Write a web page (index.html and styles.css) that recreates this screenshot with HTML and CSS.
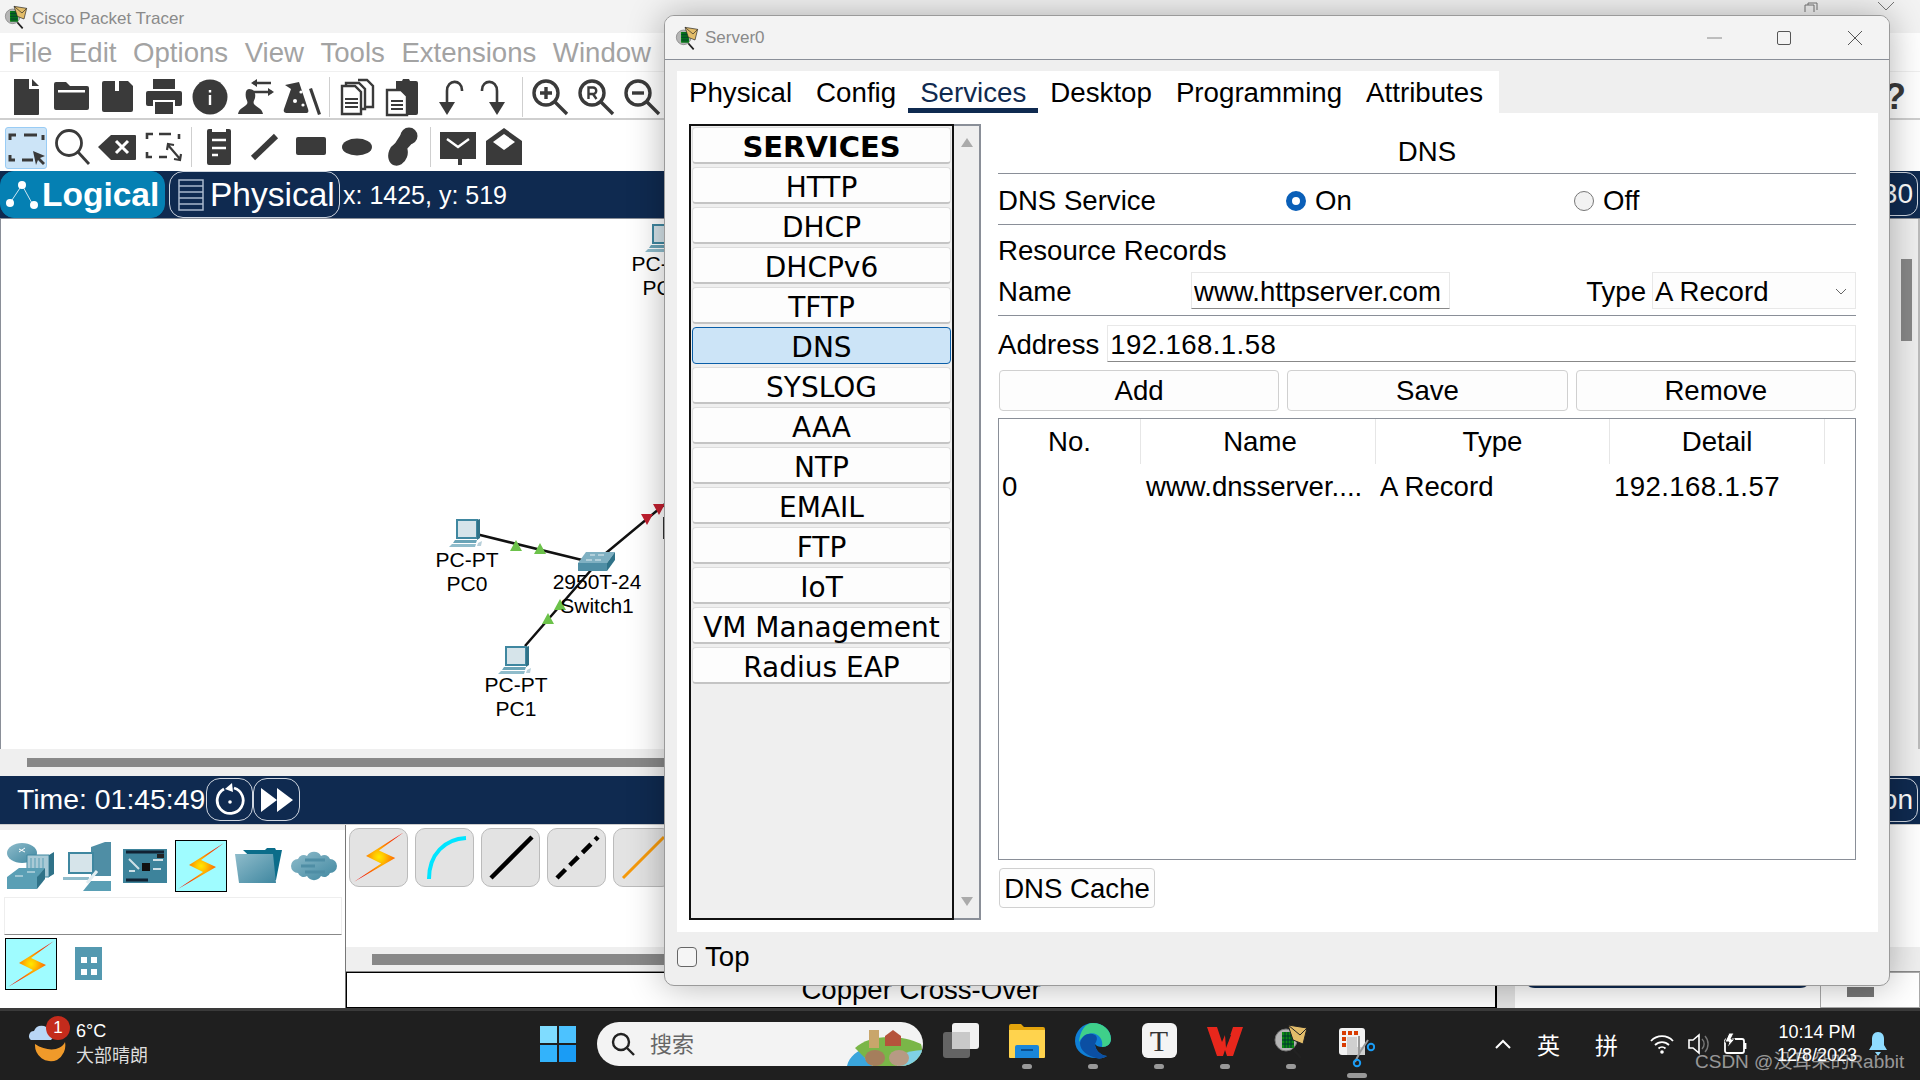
FILE: index.html
```html
<!DOCTYPE html>
<html lang="en">
<head>
  <meta charset="UTF-8">
  <title>Cisco Packet Tracer - Server0</title>
  <link rel="stylesheet" href="styles.css">
</head>
<body>

  <!-- shared drawings -->
  <svg class="defs" width="0" height="0">
    <defs>
      <radialGradient id="bolt-fill" cx="50%" cy="50%" r="55%">
        <stop offset="0" stop-color="#ffe800"/>
        <stop offset=".18" stop-color="#ffc800"/>
        <stop offset=".5" stop-color="#ff7a00"/>
        <stop offset="1" stop-color="#f00a00"/>
      </radialGradient>
      <linearGradient id="teal" x1="0" y1="0" x2="1" y2="1">
        <stop offset="0" stop-color="#8fbccb"/>
        <stop offset="1" stop-color="#3f87a0"/>
      </linearGradient>
      <symbol id="bolt" viewBox="0 0 50 50">
        <path fill="url(#bolt-fill)" d="M48 2 L13 24 L27 31 L2 48 L40 26 L25 19 Z"/>
      </symbol>
      <symbol id="pt-logo" viewBox="0 0 36 36">
        <circle cx="13" cy="17" r="11" fill="#b5b5b5" stroke="#777"/>
        <path d="M20 26 L28 35" stroke="#222" stroke-width="2.5"/>
        <rect x="9" y="9" width="12" height="16" fill="#0c8a12"/>
        <path d="M12 9v16M15 9v16M18 9v16M9 13h12M9 17h12M9 21h12" stroke="#033" stroke-width="1"/>
        <path d="M15 2 L34 5 L30 21 L20 17 Z" fill="#e3bd6a" stroke="#222"/>
        <path d="M15 2 L27 12 L34 5" fill="none" stroke="#222"/>
      </symbol>
      <symbol id="pc" viewBox="0 0 34 28">
        <path d="M8 1 H28 V19 H8 Z" fill="#d6e4ea" stroke="#3f87a0" stroke-width="2"/>
        <path d="M28 1 L31 0 V19 L28 21 Z" fill="#2f7288"/>
        <path d="M6 21 H28 L27 24 H4 Z" fill="#6aa4b7"/>
        <path d="M3 25 H27 L26 28 H0 Z" fill="#8fbccb"/>
        <path d="M29 24 L33 22 L32 27 L28 27 Z" fill="#b8d0da"/>
      </symbol>
    </defs>
  </svg>

  <div class="main-window">
    <div class="app-title">
      <svg class="title-logo"><use href="#pt-logo"/></svg>
      <span>Cisco Packet Tracer</span>
      <div class="app-title-btns">
        <svg width="14" height="10" viewBox="0 0 14 10"><path d="M1 10V3h9v7M4 3V1h9v7" fill="none" stroke="#777"/></svg>
        <svg width="18" height="10" viewBox="0 0 18 10"><path d="M2 0l8 8 M18 0l-8 8" stroke="#777" fill="none"/></svg>
      </div>
    </div>

    <div class="menu-bar">
      <span>File</span><span>Edit</span><span>Options</span><span>View</span><span>Tools</span><span>Extensions</span><span>Window</span>
    </div>

    <!-- first toolbar -->
    <div class="toolbar toolbar-one">
      <svg class="tool" viewBox="0 0 46 40"><path d="M11 2h15v10h10v25a1 1 0 0 1-1 1H11z"/><path d="M29 2l7 7h-7z"/></svg>
      <svg class="tool" viewBox="0 0 46 40"><path d="M5 7a2 2 0 0 1 2-2h10l4 4h17a2 2 0 0 1 2 2v20a2 2 0 0 1-2 2H7a2 2 0 0 1-2-2z"/><rect x="9" y="13" width="27" height="2.5" fill="#fff"/></svg>
      <svg class="tool" viewBox="0 0 46 40"><path d="M9 4h24l5 5v24a2 2 0 0 1-2 2H9a2 2 0 0 1-2-2V6a2 2 0 0 1 2-2z"/><rect x="20" y="4" width="4" height="10" fill="#fff"/></svg>
      <svg class="tool" viewBox="0 0 46 40"><rect x="12" y="2" width="22" height="10"/><rect x="5" y="14" width="36" height="15" rx="2"/><rect x="12" y="23" width="22" height="15" fill="#fff"/><rect x="14" y="25" width="18" height="12"/></svg>
      <svg class="tool" viewBox="0 0 46 40"><circle cx="23" cy="20" r="17.5"/><rect x="21.8" y="18" width="2.4" height="10" fill="#fff"/><rect x="21.8" y="13" width="2.4" height="2.5" fill="#fff"/></svg>
      <svg class="tool" viewBox="0 0 46 40"><path d="M16 12c5 0 7 4 6 9-1 3-2 4-1 6 2 3 8 4 9 10H5c1-6 7-7 9-10 1-2 0-3-1-6-1-5 0-9 3-9z"/><path d="M20 6h18M20 15h19" stroke="#3a3a3a" stroke-width="2.5" fill="none"/><path d="M24 2l-6 4 6 4zM35 11l6 4-6 4z"/></svg>
      <svg class="tool" viewBox="0 0 46 40"><path d="M6 8l14-3 9 27c1 3 0 4-2 4H8c-2 0-4-1-3-4l7-20z"/><path d="M30 12l3-1 9 26-3 1z"/><circle cx="16" cy="24" r="2" fill="#fff"/><circle cx="22" cy="15" r="1.6" fill="#fff"/><circle cx="24" cy="28" r="1.6" fill="#fff"/></svg>
      <i class="tool-sep"></i>
      <svg class="tool" viewBox="0 0 46 40"><path d="M12 6h13l6 6v20H12z M24 3h9l6 6v21h-8" fill="#fff" stroke="#3a3a3a" stroke-width="2.4"/><path d="M8 9h13l6 6v22H8z" fill="#fff" stroke="#3a3a3a" stroke-width="2.4"/><path d="M11 22h13M11 26h13M11 30h13" stroke="#3a3a3a" stroke-width="2.2"/></svg>
      <svg class="tool" viewBox="0 0 46 40"><path d="M16 4h6l1-2h6l1 2h6a2 2 0 0 1 2 2v30a2 2 0 0 1-2 2H16z"/><path d="M7 13h14l6 6v19H7z" fill="#fff" stroke="#3a3a3a" stroke-width="2.4"/><path d="M11 24h12M11 28h12M11 32h12" stroke="#3a3a3a" stroke-width="2.2"/></svg>
      <svg class="tool" viewBox="0 0 46 40"><path d="M21 27V14c0-12 15-12 15-1v1" fill="none" stroke="#3a3a3a" stroke-width="2.6"/><path d="M13 25h16l-8 13z"/></svg>
      <svg class="tool" viewBox="0 0 46 40"><path d="M25 27V14c0-12-15-12-15-1v1" fill="none" stroke="#3a3a3a" stroke-width="2.6"/><path d="M17 25h16l-8 13z"/></svg>
      <i class="tool-sep"></i>
      <svg class="tool" viewBox="0 0 46 40"><g fill="none" stroke="#3a3a3a"><circle cx="19" cy="16" r="12" stroke-width="3.4"/><path d="M28 25l12 12" stroke-width="3.4"/><path d="M13 16h12M19 10v12" stroke-width="3.4"/></g></svg>
      <svg class="tool" viewBox="0 0 46 40"><g fill="none" stroke="#3a3a3a"><circle cx="19" cy="16" r="12" stroke-width="3.4"/><path d="M28 25l12 12" stroke-width="3.4"/><path d="M15.5 22V10.5h4.500a3 3 0 0 1 0 6.500h-4.500M20 17l3.500 5" stroke-width="2.4"/></g></svg>
      <svg class="tool" viewBox="0 0 46 40"><g fill="none" stroke="#3a3a3a"><circle cx="19" cy="16" r="12" stroke-width="3.4"/><path d="M28 25l12 12" stroke-width="3.4"/><path d="M13 16h12" stroke-width="3.4"/></g></svg>
      <span class="help-mark">?</span>
    </div>

    <!-- second toolbar -->
    <div class="toolbar toolbar-two">
      <span class="tool-active"><svg class="tool" viewBox="0 0 46 40"><path d="M7 13V8h6M21 8h13M40 8v5M7 28v5h5M19 33h11" fill="none" stroke="#3a3a3a" stroke-width="3"/><path d="M30 24l12 5-5 2 5 5-2 2-5-5-2 5z"/></svg></span>
      <svg class="tool" viewBox="0 0 46 40"><g fill="none" stroke="#3a3a3a" stroke-width="2.8"><circle cx="20" cy="16" r="12.500"/><path d="M29 25l11 12"/></g></svg>
      <svg class="tool" viewBox="0 0 46 40"><path d="M3 20L16 8h24a1 1 0 0 1 1 1v23a1 1 0 0 1-1 1H16z"/><path d="M21 14l12 12M33 14L21 26" stroke="#fff" stroke-width="3"/></svg>
      <svg class="tool" viewBox="0 0 46 40"><path d="M6 12V7h6M18 7h12M38 7v5M6 25v5h5M18 30h8" fill="none" stroke="#3a3a3a" stroke-width="2.6"/><path d="M27 18l12 14M26 23l1-6 6 1M40 27l-1 6-6-1" fill="none" stroke="#3a3a3a" stroke-width="2.2"/></svg>
      <i class="tool-sep"></i>
      <svg class="tool" viewBox="0 0 46 40"><path d="M13 2h3v3h14V2h3a2 2 0 0 1 2 2v32a2 2 0 0 1-2 2H13a2 2 0 0 1-2-2V4a2 2 0 0 1 2-2z"/><path d="M16 13h14M16 21h14M16 28h6" stroke="#fff" stroke-width="2.5"/></svg>
      <svg class="tool" viewBox="0 0 46 40"><path d="M11 31L34 9" stroke="#3a3a3a" stroke-width="6" fill="none"/></svg>
      <svg class="tool" viewBox="0 0 46 40"><rect x="8" y="10" width="30" height="18" rx="2"/></svg>
      <svg class="tool" viewBox="0 0 46 40"><ellipse cx="23" cy="20" rx="15" ry="8.500"/></svg>
      <svg class="tool" viewBox="0 0 46 40"><circle cx="29" cy="9" r="8.500"/><ellipse cx="18" cy="27" rx="9.500" ry="12" transform="rotate(20 18 27)"/><path d="M23 4L14 18l12 5 11-12z"/></svg>
      <i class="tool-sep"></i>
      <svg class="tool" viewBox="0 0 46 40"><path d="M5 5h36v27H27v6h-4v-6H5z"/><path d="M12 12l11 8 11-8" fill="none" stroke="#fff" stroke-width="2.4"/></svg>
      <svg class="tool" viewBox="0 0 46 40"><path d="M5 14L23 1l18 13v24H5z"/><path d="M12 15l11-8 11 8-11 8z" fill="#fff"/></svg>
    </div>

    <div class="blue-bar">
      <div class="view-tab view-tab-on">
        <svg width="38" height="32" viewBox="0 0 38 32"><path d="M8 24L20 6l11 20" stroke="#cfe6f2" fill="none" stroke-width="1"/><circle cx="20" cy="6" r="4" fill="#fff"/><circle cx="8" cy="24" r="4" fill="#fff"/><circle cx="32" cy="26" r="4" fill="#fff"/></svg>
        <b>Logical</b>
      </div>
      <div class="view-tab">
        <svg width="30" height="34" viewBox="0 0 30 34"><path d="M3 2h24v30H3zM3 8h24M3 14h24M3 20h24M3 26h24" fill="none" stroke="#a9b8cb" stroke-width="1.500"/></svg>
        <span>Physical</span>
      </div>
      <span class="coords">x: 1425, y: 519</span>
      <span class="bar-right">Root 00:30</span>
    </div>

    <div class="canvas-row">
      <div class="canvas">
        <!-- diagram -->
        <svg class="links" width="700" height="540" viewBox="0 220 700 540">
          <path d="M476 535L582 561M525 647L592 570M606 554L665 505" stroke="#111" stroke-width="2.500" fill="none"/>
          <path d="M516 541l6 11h-12zM540 544l6 11h-12zM560 600l6 11h-12zM548 614l6 11h-12z" fill="#6cc24a"/>
          <path d="M647 526l-6-11h12zM659 516l-6-11h12z" fill="#c21f2f"/>
          <rect x="663" y="518" width="2" height="22" fill="#333"/>
        </svg>
        <svg class="node node-pc0"><use href="#pc"/></svg>
        <svg class="node node-pc1"><use href="#pc"/></svg>
        <svg class="node node-pc2"><use href="#pc"/></svg>
        <svg class="node node-switch" viewBox="0 0 37 20"><path d="M0 12L8 1h29l-8 11z" fill="#7fb0c2"/><path d="M0 12h29v8H0z" fill="#4f8ea5"/><path d="M29 12l8-11v8l-8 11z" fill="#2f7288"/><path d="M12 4h5M20 4h6M8 9h6M17 9h6" stroke="#e3eef2" stroke-width="1"/></svg>
        <div class="node-label label-pc0">PC-PT<br>PC0</div>
        <div class="node-label label-switch">2950T-24<br>Switch1</div>
        <div class="node-label label-pc1">PC-PT<br>PC1</div>
        <div class="node-label label-pc2">PC-PT<br>PC2</div>
      </div>
      <div class="v-scroll"><i></i></div>
    </div>
    <div class="h-scroll"><i></i></div>

    <div class="blue-bar time-bar">
      <span class="time-text">Time: 01:45:49</span>
      <span class="round-btn">
        <svg width="30" height="36" viewBox="0 0 30 36"><path d="M9 7A13 13 0 1 0 19 6" fill="none" stroke="#fff" stroke-width="2.800"/><path d="M17 1l1 9-8-3z" fill="#fff"/><circle cx="15" cy="20" r="1.800" fill="#fff"/></svg>
      </span>
      <span class="round-btn">
        <svg width="34" height="26" viewBox="0 0 34 26"><path d="M1 1l16 12L1 25zM17 1l16 12-16 12z" fill="#fff"/></svg>
      </span>
      <span class="bar-right">Simulation</span>
    </div>

    <div class="bottom-panel">
      <div class="device-panel">
        <div class="device-row">
          <svg class="device" width="48" height="50" viewBox="0 0 48 50"><ellipse cx="15" cy="12" rx="15" ry="10" fill="url(#teal)"/><path d="M12 8l6 3M18 7l-6 4" stroke="#fff"/><path d="M20 14h22v22H20z" fill="#a9cad6" stroke="#3f87a0"/><path d="M24 17v16M28 17v16M32 17v16M36 17v16" stroke="#5a9fb5"/><path d="M42 14l5-3v22l-5 3z" fill="#2f7288"/><path d="M0 36l12-9h26l-8 9v12H0z" fill="#5a9fb5"/><path d="M30 36l8-9v11l-8 10z" fill="#2f7288"/><path d="M8 35h8M20 31h8" stroke="#e3eef2"/></svg>
          <svg class="device" width="48" height="50" viewBox="0 0 48 50"><path d="M28 6l14-5h6v34H28z" fill="#4f8ea5"/><path d="M6 12h24v20H6z" fill="#d6e4ea" stroke="#3f87a0" stroke-width="2"/><path d="M0 36h26v3H0z" fill="#8fbccb"/><path d="M20 50l8-10h20v10z" fill="#5a9fb5"/><path d="M24 42l10-12" stroke="#e3eef2" stroke-width="3"/></svg>
          <svg class="device device-board" width="44" height="34" viewBox="0 0 44 34"><rect width="44" height="34" fill="#3d839b"/><path d="M3 3h38M3 31h22" stroke="#123" stroke-width="3"/><rect x="19" y="14" width="8" height="8" fill="#111"/><path d="M30 11h10M30 20h8M6 22h6M6 10l10 10" stroke="#cfe0e6" stroke-width="2"/><rect x="34" y="5" width="7" height="4" fill="#222"/></svg>
          <span class="bolt-box"><svg width="50" height="50"><use href="#bolt"/></svg></span>
          <svg class="device" width="47" height="36" viewBox="0 0 47 36"><path d="M8 2h22l2-2h8l1 2h6l-6 30H40z" fill="#0b6d8a"/><path d="M0 6h38l3 29H4z" fill="url(#teal)"/></svg>
          <svg class="device" width="48" height="32" viewBox="0 0 48 32"><path d="M8 9a6 6 0 0 1 9-3 8 8 0 0 1 14 0 6 6 0 0 1 9 3 7 7 0 0 1 0 14 6 6 0 0 1-9 3 8 8 0 0 1-14 0 6 6 0 0 1-9-3 7 7 0 0 1 0-14z" fill="url(#teal)"/><path d="M15 10h20M11 16h14M15 22h20" stroke="#4f8ea5" stroke-width="3"/></svg>
        </div>
        <div class="device-search"></div>
        <div class="device-row device-row-sub">
          <span class="bolt-box"><svg width="50" height="50"><use href="#bolt"/></svg></span>
          <svg class="device-grid" width="27" height="33" viewBox="0 0 27 33"><path d="M0 0h27v33H0z" fill="#5499b0"/><path d="M6 10h6v6H6zM16 10h6v6h-6zM6 22h6v6H6zM16 22h6v6h-6z" fill="#fff"/></svg>
        </div>
      </div>

      <div class="cable-panel">
        <div class="cable-row">
          <span class="cable"><svg width="54" height="54"><use href="#bolt"/></svg></span>
          <span class="cable"><svg width="50" height="50" viewBox="0 0 50 50"><path d="M9 47C9 22 25 7 46 6" fill="none" stroke="#00e5ff" stroke-width="4"/></svg></span>
          <span class="cable"><svg width="50" height="50" viewBox="0 0 50 50"><path d="M5 46L46 5" stroke="#000" stroke-width="4.500"/></svg></span>
          <span class="cable"><svg width="50" height="50" viewBox="0 0 50 50"><path d="M5 46L46 5" stroke="#000" stroke-width="4.500" stroke-dasharray="12 6"/></svg></span>
          <span class="cable"><svg width="50" height="50" viewBox="0 0 50 50"><path d="M5 46L46 5" stroke="#f59a0c" stroke-width="3"/></svg></span>
        </div>
        <div class="cable-scroll"><i></i></div>
        <div class="info-row">
          <div class="info-box">Copper Cross-Over</div>
          <i class="info-grip"></i>
          <div class="info-mid"><i></i></div>
          <div class="info-end"><i></i></div>
        </div>
      </div>
    </div>
  </div>

  <!-- Server0 dialog -->
  <div class="dialog">
    <div class="dialog-title">
      <svg class="dialog-logo"><use href="#pt-logo"/></svg>
      <span>Server0</span>
      <div class="window-btns">
        <svg class="min-btn" width="16" height="16" viewBox="0 0 16 16"><path d="M0 8h15" stroke="#888"/></svg>
        <svg width="16" height="16" viewBox="0 0 16 16"><rect x="1.500" y="1.500" width="13" height="13" rx="1.500" fill="none" stroke="#555"/></svg>
        <svg width="16" height="16" viewBox="0 0 16 16"><path d="M1 1l14 14M15 1L1 15" stroke="#555" fill="none"/></svg>
      </div>
    </div>

    <div class="dialog-body">
      <div class="tabs">
        <span class="tab">Physical</span>
        <span class="tab">Config</span>
        <span class="tab tab-on">Services</span>
        <span class="tab">Desktop</span>
        <span class="tab">Programming</span>
        <span class="tab">Attributes</span>
      </div>

      <div class="pane">
        <div class="service-col">
          <div class="service-list">
            <div class="service-item service-head">SERVICES</div>
            <div class="service-item">HTTP</div>
            <div class="service-item">DHCP</div>
            <div class="service-item">DHCPv6</div>
            <div class="service-item">TFTP</div>
            <div class="service-item service-on">DNS</div>
            <div class="service-item">SYSLOG</div>
            <div class="service-item">AAA</div>
            <div class="service-item">NTP</div>
            <div class="service-item">EMAIL</div>
            <div class="service-item">FTP</div>
            <div class="service-item">IoT</div>
            <div class="service-item">VM Management</div>
            <div class="service-item">Radius EAP</div>
          </div>
          <div class="list-scroll">
            <svg width="14" height="11" viewBox="0 0 14 11"><path d="M7 1l6 9H1z" fill="#aaa"/></svg>
            <svg width="14" height="11" viewBox="0 0 14 11"><path d="M7 10L1 1h12z" fill="#aaa"/></svg>
          </div>
        </div>

        <div class="dns-col">
          <div class="dns-heading">DNS</div>
          <div class="dns-row service-row">
            <span class="service-label">DNS Service</span>
            <span class="radio-group radio-on"><i class="radio radio-checked"></i>On</span>
            <span class="radio-group"><i class="radio"></i>Off</span>
          </div>
          <div class="records-label">Resource Records</div>
          <div class="dns-row name-row">
            <span class="name-label">Name</span>
            <input class="field name-field" type="text" value="www.httpserver.com">
            <span class="type-label">Type</span>
            <div class="field type-field">A Record
              <svg width="12" height="8" viewBox="0 0 12 8"><path d="M1 1l5 5 5-5" fill="none" stroke="#666"/></svg>
            </div>
          </div>
          <div class="address-row">
            <span class="address-label">Address</span>
            <input class="field address-field" type="text" value="192.168.1.58">
          </div>
          <div class="btn-row">
            <button class="btn">Add</button>
            <button class="btn">Save</button>
            <button class="btn">Remove</button>
          </div>
          <div class="records">
            <div class="rec-head">
              <span class="c-no">No.</span>
              <span class="c-name">Name</span>
              <span class="c-type">Type</span>
              <span class="c-detail">Detail</span>
            </div>
            <div class="rec-line">
              <span class="c-no">0</span>
              <span class="c-name">www.dnsserver....</span>
              <span class="c-type">A Record</span>
              <span class="c-detail">192.168.1.57</span>
            </div>
          </div>
          <button class="btn cache-btn">DNS Cache</button>
        </div>
      </div>

      <label class="top-row"><i class="check"></i>Top</label>
    </div>
  </div>

  <!-- Windows taskbar -->
  <div class="taskbar">
    <div class="weather">
      <svg class="weather-icon" width="44" height="44" viewBox="0 0 44 44"><path d="M9 24a16 16 0 0 0 22 16 17 17 0 0 0 8-18c-4 9-18 10-30 2z" fill="#f09a2a"/><path d="M5 20a5 5 0 0 1 3-9 8 8 0 0 1 15 0 5 5 0 0 1 2 9z" fill="#b9d6f5"/></svg>
      <span class="weather-badge">1</span>
      <div class="weather-text"><div>6°C</div><div class="weather-desc">大部晴朗</div></div>
    </div>
    <svg class="win-logo" width="36" height="36" viewBox="0 0 36 36"><rect width="17" height="17" fill="#7fdcff"/><rect x="19" width="17" height="17" fill="#4cc2ff"/><rect y="19" width="17" height="17" fill="#33b3fb"/><rect x="19" y="19" width="17" height="17" fill="#1a9cf5"/></svg>
    <div class="search-pill">
      <svg width="24" height="24" viewBox="0 0 24 24"><circle cx="10" cy="10" r="8" fill="none" stroke="#222" stroke-width="2.400"/><path d="M16 16l7 7" stroke="#222" stroke-width="2.400"/></svg>
      <span class="search-text">搜索</span>
      <svg class="search-art" width="78" height="44" viewBox="0 0 78 44"><path d="M2 44C4 34 14 28 20 26c-3 8 1 14 8 18z" fill="#3aa5dc"/><path d="M10 26c14-14 46-14 66-4 3 8-1 16-8 22H28z" fill="#7ab648"/><path d="M24 8h10v18H24z" fill="#c9a66b"/><path d="M40 14l8-6 8 6v10H40z" fill="#b5533c"/><path d="M52 34q14-6 26-6v16H52z" fill="#7fd0e6"/><ellipse cx="30" cy="36" rx="10" ry="8" fill="#a57e5c"/><ellipse cx="54" cy="36" rx="10" ry="8" fill="#b79a84"/></svg>
    </div>
    <div class="task-apps">
      <div class="app">
        <svg width="36" height="36" viewBox="0 0 36 36"><rect x="9" width="27" height="26" rx="3" fill="#f2f2f2"/><rect y="9" width="27" height="26" rx="3" fill="#6b6b6b" opacity=".9"/><rect x="9" y="9" width="18" height="17" fill="#c9c9c9"/></svg>
      </div>
      <div class="app app-run">
        <svg width="36" height="36" viewBox="0 0 36 36"><path d="M0 3a2 2 0 0 1 2-2h10l3 3h19a2 2 0 0 1 2 2v6H0z" fill="#e3a40c"/><path d="M0 7h36v27a1 1 0 0 1-1 1H1a1 1 0 0 1-1-1z" fill="#ffd34d"/><path d="M6 35V24a2 2 0 0 1 2-2h20a2 2 0 0 1 2 2v11z" fill="#1a86d9"/><path d="M12 27h12" stroke="#0a4f8f" stroke-width="2"/></svg>
      </div>
      <div class="app app-run">
        <svg width="36" height="36" viewBox="0 0 36 36"><path d="M18 0c10 0 18 7 18 16 0 5-4 8-9 8-3 0-6-1-7-3 0 5 4 11 12 12-3 2-7 3-11 2C9 35 0 28 0 18 0 8 8 0 18 0z" fill="#0f7fd6"/><path d="M18 0c10 0 18 7 18 16 0 5-4 8-9 8 2-8-5-16-14-13C9 12 6 15 4 19 5 8 10 0 18 0z" fill="#3fd08a"/><path d="M5 20c2-8 9-11 15-8 3 2 2 6 0 9 0 5 4 11 12 12-3 2-7 3-11 2C13 33 5 28 5 20z" fill="#0b4fa3"/></svg>
      </div>
      <div class="app app-run">
        <span class="typora">T</span>
      </div>
      <div class="app app-run">
        <svg width="36" height="30" viewBox="0 0 36 30"><path d="M0 1h10l5 15 3-7 3 7 5-15h10l-10 29h-6l-2-6-2 6h-6z" fill="#e8271c"/><path d="M18 9l6 0-5 13z" fill="#1f1f1f"/></svg>
      </div>
      <div class="app app-run">
        <svg width="36" height="36"><use href="#pt-logo"/></svg>
      </div>
      <div class="app app-run app-snip">
        <svg width="36" height="40" viewBox="0 0 36 40"><rect width="26" height="27" rx="3" fill="#f2f2f2"/><path d="M3 3h4v4H3zM9 3h4v4H9zM15 3h4v4h-4zM3 9h4v4H3zM3 15h4v4H3z" fill="#d83b01"/><path d="M8 9h10v10h8v8H8z" fill="#d0d0d0"/><path d="M20 8v18M16 34l5-10 8-12" stroke="#999" stroke-width="2" fill="none"/><circle cx="32" cy="19" r="3.200" fill="none" stroke="#1a9cf5" stroke-width="2"/><circle cx="18" cy="35" r="3.200" fill="none" stroke="#1a9cf5" stroke-width="2"/></svg>
      </div>
    </div>
    <div class="tray">
      <svg width="16" height="10" viewBox="0 0 16 10"><path d="M1 9l7-7 7 7" fill="none" stroke="#fff" stroke-width="2"/></svg>
      <span class="ime ime-en">英</span>
      <span class="ime ime-py">拼</span>
      <svg class="tray-wifi" width="24" height="20" viewBox="0 0 24 20"><path d="M1 7a15 15 0 0 1 22 0M5 11a10 10 0 0 1 14 0M8.500 14.500a5 5 0 0 1 7 0" fill="none" stroke="#fff" stroke-width="1.800"/><circle cx="12" cy="18" r="1.800" fill="#fff"/></svg>
      <svg class="tray-sound" width="24" height="24" viewBox="0 0 24 24"><path d="M1 8h4l6-5v18l-6-5H1z" fill="none" stroke="#fff" stroke-width="1.600"/><path d="M14 7a7 7 0 0 1 0 10M17 4a12 12 0 0 1 0 16" fill="none" stroke="#777" stroke-width="1.400"/></svg>
      <svg class="tray-battery" width="24" height="24" viewBox="0 0 24 24"><rect x="2" y="7" width="19" height="14" rx="2" fill="none" stroke="#fff" stroke-width="1.800"/><rect x="21" y="11" width="2.400" height="6" fill="#fff"/><path d="M6 1L2 10h4l-2 6 8-9H8l3-6z" fill="#fff" stroke="#1f1f1f"/></svg>
      <div class="clock"><div>10:14 PM</div><div>12/8/2023</div></div>
      <svg class="tray-bell" width="20" height="26" viewBox="0 0 20 26"><path d="M10 1c-4 0-6 3-6 7v6l-3 5h18l-3-5V8c0-4-2-7-6-7z" fill="#8fdcff"/><path d="M7 21h6l-3 4z" fill="#8fdcff"/></svg>
    </div>
    <span class="watermark">CSDN @没耳朵的Rabbit</span>
  </div>

</body>
</html>
```

FILE: styles.css
```css
* {
  box-sizing: border-box;
}

html, body {
  margin: 0;
  padding: 0;
  height: 1080px;
  overflow: hidden;
}

body {
  position: relative;
  font-family: "Liberation Sans", "Noto Sans CJK SC", sans-serif;
  background-color: #1f1f1f;
  color: #000;
}

.defs {
  position: absolute;
}

/* main window */
.main-window {
  height: 1008px;
  background-color: #fff;
  display: flex;
  flex-direction: column;
}

.app-title {
  height: 33px;
  background-color: #f3f3f3;
  display: flex;
  align-items: center;
  padding: 4px 0 0 4px;
  font-size: 17px;
  color: #8a8a8a;
}

.title-logo {
  width: 24px;
  height: 24px;
  margin: -4px 4px 0 0;
}

.app-title-btns {
  margin-left: auto;
  margin-right: 26px;
  margin-bottom: 24px;
  display: flex;
  gap: 58px;
}

.menu-bar {
  height: 39px;
  display: flex;
  gap: 16.5px;
  align-items: center;
  padding: 2px 0 0 8px;
  font-size: 27.6px;
  color: #a3a3a3;
  border-bottom: 1px solid #f0f0f0;
}

.toolbar {
  display: flex;
  align-items: center;
  padding-left: 3px;
  border-bottom: 2px solid #cfcfcf;
}

.toolbar-one {
  height: 49px;
  padding-top: 4px;
}

.toolbar-two {
  height: 51px;
  padding-top: 2px;
  border-bottom: 0;
}

.tool {
  width: 46px;
  height: 40px;
  fill: #3a3a3a;
  flex: none;
}

.tool-sep {
  width: 1px;
  height: 40px;
  background-color: #cfcfcf;
  margin: 0 4px;
  flex: none;
}

.tool-active {
  display: block;
  height: 40px;
  width: 46px;
  flex: none;
  position: relative;
}

.tool-active::before {
  content: "";
  position: absolute;
  left: 2px;
  top: 0;
  width: 40px;
  height: 40px;
  background-color: #cce4f7;
  border: 1px solid #99ccf5;
  border-radius: 3px;
}

.tool-active .tool {
  position: relative;
}

.help-mark {
  margin-left: auto;
  margin-right: 14px;
  font-size: 36px;
  font-weight: bold;
  color: #3a3a3a;
}

.blue-bar {
  height: 48px;
  flex: none;
  background-color: #0f2a50;
  display: flex;
  align-items: center;
  color: #fff;
  border-bottom: 1px solid #8a8f98;
}

.view-tab {
  height: 47px;
  display: flex;
  align-items: center;
  border-radius: 14px;
  border: 1px solid #cfd6e0;
  font-size: 33.5px;
  width: 171px;
  margin-left: 4px;
  padding: 2px 0 0 6px;
  gap: 4px;
  white-space: nowrap;
}

.view-tab-on {
  width: 165px;
  margin-left: 0;
  padding-left: 1px;
  gap: 2px;
  background-color: #0580b3;
  border-color: #0580b3;
}

.coords {
  font-size: 25px;
  margin-left: 3px;
  padding-top: 2px;
}

.bar-right {
  margin-left: auto;
  height: 44px;
  width: 170px;
  margin-right: 2px;
  border: 1px solid #cfd6e0;
  border-radius: 12px;
  font-size: 28px;
  line-height: 42px;
  text-align: right;
  padding-right: 4px;
  white-space: nowrap;
}

.canvas-row {
  height: 530px;
  flex: none;
  display: flex;
}

.canvas {
  position: relative;
  flex: 1;
  border-left: 1px solid #8a8f98;
  overflow: hidden;
}

.links {
  position: absolute;
  left: -1px;
  top: 0;
}

.node {
  position: absolute;
  width: 34px;
  height: 28px;
}

.node-pc0 { left: 448px; top: 300px; }
.node-pc1 { left: 497px; top: 427px; }
.node-pc2 { left: 644px; top: 5px; }
.node-switch { left: 577px; top: 332px; width: 37px; height: 20px; }

.node-label {
  position: absolute;
  width: 120px;
  text-align: center;
  font-size: 21px;
  line-height: 24px;
}

.label-pc0 { left: 406px; top: 329px; }
.label-switch { left: 536px; top: 351px; }
.label-pc1 { left: 455px; top: 454px; }
.label-pc2 { left: 602px; top: 33px; }

.v-scroll {
  width: 30px;
  flex: none;
  padding: 40px 6px 0 11px;
  background-color: #efefef;
  border-right: 2px solid #bbb;
}

.v-scroll i {
  display: block;
  height: 82px;
  background-color: #888;
}

.h-scroll {
  height: 27px;
  flex: none;
  background-color: #efefef;
  padding: 9px 0 0 27px;
}

.h-scroll i {
  display: block;
  height: 9px;
  width: 1700px;
  background-color: #888;
}

.time-bar {
  border-bottom: 0;
  padding-left: 17px;
}

.time-text {
  font-size: 28.4px;
  margin-right: 1px;
}

.round-btn {
  width: 47px;
  height: 43px;
  border: 1px solid #cfd6e0;
  border-radius: 14px;
  display: flex;
  align-items: center;
  justify-content: center;
}

.bottom-panel {
  flex: 1;
  display: flex;
  border-top: 1px solid #ccc;
}

.device-panel {
  width: 346px;
  flex: none;
  padding: 5px 0;
  background: linear-gradient(#efefef 5px, #fff 5px);
  border-right: 1px solid #777;
  position: relative;
  display: flex;
  flex-direction: column;
}

.device-row {
  height: 62px;
  display: flex;
  align-items: center;
  padding-left: 7px;
  gap: 8px;
  margin-top: 5px;
}

.device {
  flex: none;
}

.device-board {
  margin-left: 4px;
}

.bolt-box {
  width: 52px;
  height: 52px;
  flex: none;
  background-color: #9ffcff;
  border: 1px solid #000;
  display: flex;
}

.device-search {
  height: 38px;
  margin: 0 3px 0 4px;
  border: 1px solid #eee;
  border-bottom: 1px solid #888;
}

.device-row-sub {
  padding-left: 5px;
  gap: 18px;
  height: 54px;
  margin-top: 2px;
}

.cable-panel {
  flex: 1;
  display: flex;
  flex-direction: column;
  min-width: 0;
}

.cable-row {
  height: 122px;
  padding: 3px 0 0 3px;
  display: flex;
  gap: 7px;
  flex: none;
}

.cable {
  width: 59px;
  height: 59px;
  background-color: #e3e3e3;
  border: 1px solid #bbb;
  border-radius: 10px;
  display: flex;
  align-items: center;
  justify-content: center;
}

.cable-scroll {
  height: 25px;
  flex: none;
  background-color: #efefef;
  padding: 7px 0 0 26px;
  border-bottom: 1px solid #8a8a8a;
}

.cable-scroll i {
  display: block;
  height: 11px;
  width: 1000px;
  background-color: #888;
}

.info-row {
  flex: 1;
  display: flex;
  min-height: 0;
}

.info-box {
  width: 1151px;
  flex: none;
  border: 1px solid #000;
  border-right-width: 2px;
  text-align: center;
  font-size: 27.6px;
  line-height: 34px;
  overflow: hidden;
}

.info-grip {
  width: 18px;
  flex: none;
  background-color: #e4e4e4;
}

.info-mid {
  width: 305px;
  flex: none;
  padding: 0 8px 0 8px;
  background-color: #fff;
}

.info-mid i {
  display: block;
  height: 16px;
  background-color: #0f2a50;
  border-radius: 0 0 12px 12px;
}

.info-end {
  flex: 1;
  border: 1px solid #aaa;
  padding: 14px 0 0 26px;
}

.info-end i {
  display: block;
  width: 27px;
  height: 10px;
  background-color: #777;
}

/* Server0 dialog, floats over the main window */
.dialog {
  position: absolute;
  left: 664px;
  top: 15px;
  width: 1226px;
  height: 971px;
  display: flex;
  flex-direction: column;
  background-color: #efefef;
  border: 1px solid #9a9a9a;
  border-radius: 10px;
  box-shadow: 0 0 36px rgba(0, 0, 0, 0.3);
  overflow: hidden;
}

.dialog-title {
  height: 44px;
  flex: none;
  background-color: #f3f3f3;
  border-bottom: 1px solid #8a8f98;
  display: flex;
  align-items: center;
  padding-left: 10px;
  font-size: 17px;
  color: #8a8a8a;
}

.dialog-logo {
  width: 24px;
  height: 24px;
  margin-right: 6px;
}

.window-btns {
  margin-left: auto;
  margin-right: 26px;
  display: flex;
  gap: 55px;
}

.min-btn {
  margin-right: -2px;
}

.dialog-body {
  flex: 1;
  padding: 11px 11px 0 12px;
  display: flex;
  flex-direction: column;
}

.tabs {
  height: 42px;
  width: 822px;
  flex: none;
  background-color: #fff;
  display: flex;
}

.tab {
  padding: 0 12px;
  font-size: 27.7px;
  line-height: 44px;
}

.tab-on {
  color: #0f2a50;
  border-bottom: 5px solid #0f2a50;
}

.pane {
  height: 819px;
  flex: none;
  background-color: #fff;
  display: flex;
  padding: 11px 22px 0 12px;
}

.service-col {
  width: 292px;
  height: 796px;
  flex: none;
  display: flex;
}

.service-list {
  width: 265px;
  flex: none;
  background-color: #efefef;
  border: 2px solid #111;
  padding: 1px 1px 0 1px;
  display: flex;
  flex-direction: column;
  gap: 3px;
}

.service-item {
  height: 37px;
  flex: none;
  background-color: #fdfdfd;
  border: 1px solid #ddd;
  border-bottom: 2px solid #c4c4c4;
  border-radius: 4px;
  text-align: center;
  font-family: "DejaVu Sans", sans-serif;
  font-size: 28px;
  line-height: 40px;
  white-space: nowrap;
}

.service-head {
  font-weight: bold;
  font-size: 29px;
  line-height: 38px;
}

.service-on {
  background-color: #cce4f7;
  border: 1px solid #0a5ea8;
}

.list-scroll {
  flex: 1;
  background-color: #efefef;
  border-right: 2px solid #8a8f98;
  border-bottom: 2px solid #8a8f98;
  border-top: 2px solid #8a8f98;
  display: flex;
  flex-direction: column;
  justify-content: space-between;
  align-items: center;
  padding: 11px 0;
}

.dns-col {
  flex: 1;
  margin-left: 17px;
  min-width: 0;
  font-size: 27.6px;
}

.dns-heading {
  height: 50px;
  border-bottom: 1px solid #8a8f98;
  text-align: center;
  line-height: 56px;
}

.dns-row {
  display: flex;
  align-items: center;
  border-bottom: 1px solid #8a8f98;
}

.service-row {
  height: 51px;
  padding-top: 3px;
}

.service-label {
  width: 288px;
}

.radio-group {
  display: flex;
  align-items: center;
  gap: 9px;
}

.radio-on {
  width: 288px;
}

.radio {
  width: 20px;
  height: 20px;
  border-radius: 50%;
  background-color: #f2f2f2;
  border: 1px solid #777;
  flex: none;
}

.radio-checked {
  background-color: #fff;
  border: 6px solid #0a5fb8;
}

.records-label {
  height: 47px;
  line-height: 51px;
}

.name-row {
  height: 44px;
  padding-bottom: 7px;
}

.name-label {
  width: 193px;
  padding-top: 4px;
}

.field {
  font-family: inherit;
  font-size: 27.6px;
  height: 37px;
  padding: 2px 2px 0 2px;
  margin: 0;
  background-color: #fff;
  border: 1px solid #e8e8e8;
  border-bottom: 1px solid #888;
  outline: none;
  color: #000;
}

.name-field {
  width: 259px;
  padding-top: 4px;
}

.type-label {
  margin-left: auto;
  margin-right: 6px;
  padding-top: 4px;
}

.type-field {
  width: 204px;
  display: flex;
  align-items: center;
  justify-content: space-between;
  padding: 4px 8px 0 2px;
  border-bottom-color: #e8e8e8;
  background-color: #fdfdfd;
}

.address-row {
  display: flex;
  align-items: center;
  margin-top: 9px;
  gap: 8px;
}

.address-label {
  padding-top: 2px;
}

.address-field {
  flex: 1;
  min-width: 0;
  letter-spacing: 0.4px;
}

.btn-row {
  display: flex;
  gap: 8px;
  margin: 8px 0 0 1px;
}

.btn {
  height: 41px;
  flex: 1;
  background-color: #fdfdfd;
  border: 1px solid #d0d0d0;
  border-radius: 4px;
  font-family: inherit;
  font-size: 27.6px;
  padding: 0;
  color: #000;
}

.records {
  height: 442px;
  margin-top: 7px;
  border: 1px solid #8a8f98;
}

.rec-head, .rec-line {
  display: flex;
}

.rec-head {
  height: 45px;
  line-height: 46px;
  text-align: center;
}

.rec-head span {
  border-right: 1px solid #e6e6e6;
}

.rec-head .c-name {
  padding-left: 4px;
}

.rec-line {
  height: 44px;
  line-height: 46px;
}

.rec-line span {
  padding-left: 3px;
  white-space: nowrap;
}

.c-no { width: 142px; }
.c-name { width: 235px; }
.c-type { width: 234px; }
.c-detail { width: 215px; }

.rec-line .c-name { padding-left: 5px; }
.rec-line .c-type { padding-left: 4px; }
.rec-line .c-detail { padding-left: 4px; letter-spacing: 0.4px; }

.cache-btn {
  flex: none;
  width: 156px;
  height: 40px;
  margin: 8px 0 0 1px;
  padding-top: 2px;
  display: block;
}

.top-row {
  flex: 1;
  display: flex;
  align-items: center;
  gap: 8px;
  font-size: 27.6px;
  padding-bottom: 4px;
}

.check {
  width: 20px;
  height: 20px;
  background-color: #f5f5f5;
  border: 1px solid #666;
  border-radius: 4px;
}

/* taskbar */
.taskbar {
  position: relative;
  height: 72px;
  background-color: #1f1f1f;
  border-top: 3px solid #3a3a3a;
  padding-bottom: 3px;
  display: flex;
  align-items: center;
  color: #fff;
}

.weather {
  position: relative;
  width: 540px;
  flex: none;
  display: flex;
  align-items: center;
  padding-left: 26px;
}

.weather-icon {
  margin-top: -4px;
}

.weather-badge {
  position: absolute;
  left: 46px;
  top: -3px;
  width: 24px;
  height: 24px;
  border-radius: 50%;
  background-color: #c42b1c;
  font-size: 17px;
  line-height: 24px;
  text-align: center;
}

.weather-text {
  margin-left: 6px;
  font-size: 18px;
  line-height: 25px;
}

.weather-desc {
  color: #ddd;
}

.win-logo {
  flex: none;
}

.search-pill {
  width: 326px;
  height: 44px;
  flex: none;
  margin-left: 21px;
  background-color: #f3f3f3;
  border-radius: 22px;
  display: flex;
  align-items: center;
  padding-left: 14px;
  overflow: hidden;
}

.search-text {
  margin: 0 0 4px 15px;
  font-size: 22px;
  color: #666;
}

.search-art {
  margin-left: auto;
}

.task-apps {
  display: flex;
  margin-left: 20px;
  gap: 30px;
  flex: none;
}

.app {
  position: relative;
  width: 36px;
  height: 36px;
  display: flex;
  align-items: center;
  justify-content: center;
}

.app-run::after {
  content: "";
  position: absolute;
  left: 13px;
  bottom: -10px;
  width: 10px;
  height: 5px;
  border-radius: 3px;
  background-color: #999;
}

.app-snip {
  margin-top: 7px;
}

.app-snip::after {
  left: 8px;
  bottom: -12px;
  width: 20px;
}

.typora {
  width: 35px;
  height: 35px;
  background-color: #f4f4f4;
  border-radius: 6px;
  color: #333;
  font-family: "Liberation Serif", serif;
  font-size: 30px;
  line-height: 35px;
  text-align: center;
}

.tray {
  display: flex;
  align-items: center;
  margin-left: 120px;
  flex: none;
}

.ime {
  font-family: "Noto Sans CJK SC", sans-serif;
  font-size: 23px;
}

.ime-en {
  margin-left: 26px;
}

.ime-py {
  margin-left: 35px;
}

.tray-wifi {
  margin-left: 32px;
}

.tray-sound {
  margin-left: 14px;
}

.tray-battery {
  margin-left: 11px;
}

.clock {
  width: 100px;
  margin-left: 20px;
  text-align: center;
  font-size: 18px;
  line-height: 23px;
}

.tray-bell {
  margin-left: 1px;
}

/* CSDN mark printed over the tray */
.watermark {
  position: absolute;
  left: 1695px;
  top: 39px;
  font-size: 19px;
  line-height: 24px;
  color: rgba(255, 255, 255, 0.55);
}
```
